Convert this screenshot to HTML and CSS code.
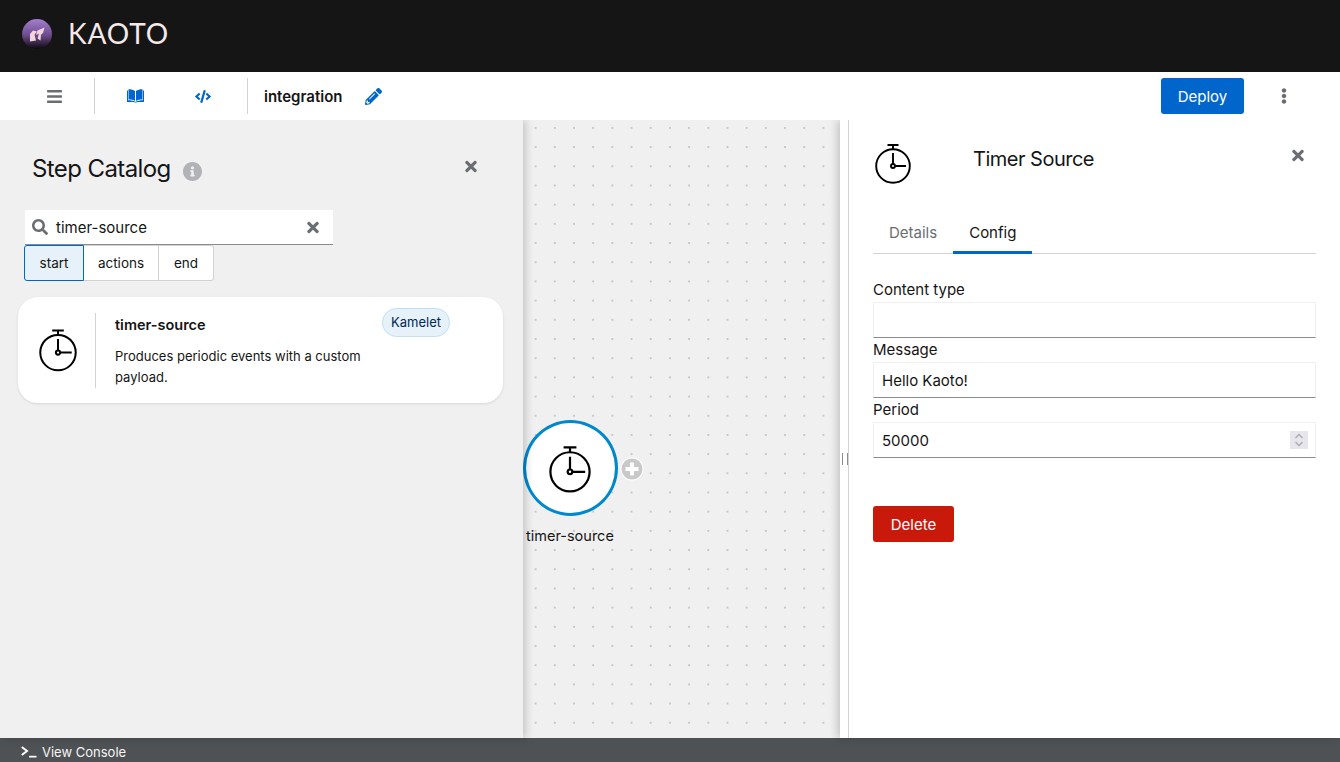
FILE: index.html
```html
<!DOCTYPE html>
<html lang="en">
<head>
<meta charset="utf-8">
<title>Kaoto</title>
<link rel="stylesheet" href="styles.css">
</head>
<body>
<svg class="sprites" width="0" height="0" aria-hidden="true">
  <symbol id="stopwatch" viewBox="0 0 36 40">
    <g fill="none" stroke="#000" stroke-width="1.9">
      <circle cx="18" cy="22" r="16.8"/>
      <path d="M12.5 1h11M18 1v4.5M18 9v11M20.5 22H31"/>
      <circle cx="18" cy="22" r="2"/>
    </g>
  </symbol>
  <symbol id="times" viewBox="0 0 352 512"><path d="M242.72 256l100.07-100.07c12.28-12.28 12.28-32.19 0-44.48l-22.24-22.24c-12.28-12.28-32.19-12.28-44.48 0L176 189.28 75.93 89.21c-12.28-12.28-32.19-12.28-44.48 0L9.21 111.45c-12.28 12.28-12.28 32.19 0 44.48L109.28 256 9.21 356.07c-12.28 12.28-12.28 32.19 0 44.48l22.24 22.24c12.28 12.28 32.2 12.28 44.48 0L176 322.72l100.07 100.07c12.28 12.28 32.2 12.28 44.48 0l22.24-22.24c12.28-12.28 12.28-32.19 0-44.48L242.72 256z"/></symbol>
</svg>

<header class="masthead">
  <svg class="logo-mark" width="30" height="30" viewBox="0 0 30 30" aria-hidden="true">
    <defs>
      <linearGradient id="logo-grad" x1="0" y1="0" x2="0" y2="1">
        <stop offset="0" stop-color="#a47fd0"/>
        <stop offset="0.55" stop-color="#6b4a8a"/>
        <stop offset="1" stop-color="#0c0a0e"/>
      </linearGradient>
    </defs>
    <circle cx="15" cy="15" r="15" fill="url(#logo-grad)"/>
    <path fill="#f3d3dc" d="M8 15 11 11.500 15 12.500 12.500 15.500 14 21.500 8 22.500zM15.500 11.500 22.500 8.500 21 14 19 15.500 18.500 21.500 15.500 19.500 17 14.500 14 16z"/>
  </svg>
  <span class="logo-text">KAOTO</span>
</header>

<nav class="toolbar">
  <div class="tool-cell tool-menu">
    <svg width="15" height="17" viewBox="0 0 448 512" class="icon-grey" aria-hidden="true"><path d="M16 132h416c8.837 0 16-7.163 16-16V76c0-8.837-7.163-16-16-16H16C7.163 60 0 67.163 0 76v40c0 8.837 7.163 16 16 16zm0 160h416c8.837 0 16-7.163 16-16v-40c0-8.837-7.163-16-16-16H16c-8.837 0-16 7.163-16 16v40c0 8.837 7.163 16 16 16zm0 160h416c8.837 0 16-7.163 16-16v-40c0-8.837-7.163-16-16-16H16c-8.837 0-16 7.163-16 16v40c0 8.837 7.163 16 16 16z"/></svg>
  </div>
  <div class="tool-sep"></div>
  <div class="tool-cell tool-book">
    <svg width="17" height="16" viewBox="0 0 17 16" class="icon-blue" aria-hidden="true"><path d="M1.500 1.300c2.500 0 5 .6 6.500 1.800v9.800C6.500 12 4 11.500 1.500 11.500zM15.500 1.300c-2.500 0-5 .6-6.500 1.800v9.800c1.500-.9 4-1.400 6.500-1.400z"/><path d="M0 2.500h1V12.300c2.800 0 5.500.5 7 1.500h1c1.500-1 4.200-1.500 7-1.500V2.500h1V14h-6c-1 0-1.500.5-2.500.5S7 14 6 14H0z"/></svg>
  </div>
  <div class="tool-cell tool-code">
    <svg width="16" height="13" viewBox="0 0 640 512" class="icon-blue" aria-hidden="true"><path d="M278.9 511.5l-61-17.700c-6.400-1.800-10-8.500-8.200-14.900L346.200 8.700c1.800-6.400 8.500-10 14.900-8.200l61 17.700c6.400 1.800 10 8.500 8.200 14.900L293.800 503.300c-1.900 6.400-8.500 10.100-14.900 8.200zm-114-112.200l43.500-46.400c4.600-4.900 4.300-12.700-.8-17.200L117 256l90.600-79.700c5.100-4.500 5.500-12.300.8-17.200l-43.500-46.400c-4.500-4.800-12.100-5.100-17-.5L3.800 247.200c-5.100 4.700-5.100 12.800 0 17.500l144.100 135.100c4.900 4.600 12.500 4.400 17-.5zm327.200.6l144.100-135.100c5.100-4.700 5.100-12.800 0-17.500L492.100 112.100c-4.800-4.500-12.400-4.300-17 .5L431.600 159c-4.600 4.900-4.300 12.700.8 17.200L523 256l-90.600 79.700c-5.100 4.500-5.500 12.300-.8 17.200l43.500 46.400c4.500 4.900 12.100 5.100 17 .6z"/></svg>
  </div>
  <div class="tool-sep"></div>
  <span class="integration-name">integration</span>
  <svg class="pencil icon-blue" width="17" height="17" viewBox="0 0 512 512" aria-hidden="true"><path d="M497.900 142.100l-46.100 46.100c-4.700 4.700-12.300 4.700-17 0l-111-111c-4.700-4.700-4.700-12.300 0-17l46.100-46.100c18.700-18.700 49.100-18.700 67.900 0l60.100 60.100c18.800 18.700 18.800 49.100 0 67.900zM284.200 99.800L21.600 362.400.4 483.900c-2.900 16.400 11.400 30.600 27.800 27.800l121.500-21.300 262.600-262.600c4.700-4.700 4.700-12.300 0-17l-111-111c-4.800-4.700-12.400-4.700-17.100 0zM124.100 339.900c-5.500-5.500-5.500-14.300 0-19.800l154-154c5.500-5.500 14.300-5.500 19.800 0s5.500 14.300 0 19.800l-154 154c-5.500 5.500-14.300 5.500-19.800 0zM88 424h48v36.300l-64.500 11.300-31.100-31.100L51.700 376H88v48z"/></svg>
  <button class="btn btn-deploy" type="button">Deploy</button>
  <svg class="kebab icon-grey" width="6" height="16" viewBox="0 0 192 512" aria-hidden="true"><path d="M96 184c39.800 0 72 32.200 72 72s-32.200 72-72 72-72-32.200-72-72 32.200-72 72-72zM24 80c0 39.800 32.200 72 72 72s72-32.200 72-72S135.800 8 96 8 24 40.200 24 80zm0 352c0 39.800 32.200 72 72 72s72-32.200 72-72-32.200-72-72-72-72 32.200-72 72z"/></svg>
</nav>

<main class="workspace">
  <aside class="catalog">
    <div class="catalog-head">
      <h1 class="catalog-title">Step Catalog</h1>
      <svg class="info" width="19" height="19" viewBox="8 8 496 496" aria-hidden="true"><path d="M256 8C119.043 8 8 119.083 8 256c0 136.997 111.043 248 248 248s248-111.003 248-248C504 119.083 392.957 8 256 8zm0 110c23.196 0 42 18.804 42 42s-18.804 42-42 42-42-18.804-42-42 18.804-42 42-42zm56 254c0 6.627-5.373 12-12 12h-88c-6.627 0-12-5.373-12-12v-24c0-6.627 5.373-12 12-12h12v-64h-12c-6.627 0-12-5.373-12-12v-24c0-6.627 5.373-12 12-12h64c6.627 0 12 5.373 12 12v100h12c6.627 0 12 5.373 12 12v24z"/></svg>
      <svg class="close-x catalog-close icon-grey" width="12" height="17" aria-hidden="true"><use href="#times"/></svg>
    </div>
    <div class="search">
      <svg class="icon-grey" width="16" height="16" viewBox="0 0 512 512" aria-hidden="true"><path d="M505 442.700L405.300 343c-4.500-4.500-10.600-7-17-7H372c27.600-35.300 44-79.700 44-128C416 93.100 322.900 0 208 0S0 93.100 0 208s93.100 208 208 208c48.300 0 92.700-16.400 128-44v16.300c0 6.400 2.500 12.500 7 17l99.700 99.700c9.400 9.400 24.600 9.400 33.900 0l28.300-28.300c9.400-9.400 9.400-24.600.1-34zM208 336c-70.700 0-128-57.200-128-128 0-70.700 57.200-128 128-128 70.700 0 128 57.200 128 128 0 70.700-57.200 128-128 128z"/></svg>
      <span class="search-text">timer-source</span>
      <svg class="icon-grey" width="12" height="17" aria-hidden="true"><use href="#times"/></svg>
    </div>
    <div class="toggle-group">
      <button class="toggle toggle-start is-on" type="button">start</button>
      <button class="toggle toggle-actions" type="button">actions</button>
      <button class="toggle toggle-end" type="button">end</button>
    </div>
    <article class="step-card">
      <div class="step-icon"><svg width="38" height="43" aria-hidden="true"><use href="#stopwatch"/></svg></div>
      <div class="step-body">
        <h2 class="step-name">timer-source</h2>
        <p class="step-desc">Produces periodic events with a custom payload.</p>
      </div>
      <span class="badge">Kamelet</span>
    </article>
  </aside>

  <section class="canvas">
    <div class="node">
      <svg width="42" height="47" aria-hidden="true"><use href="#stopwatch"/></svg>
    </div>
    <svg class="node-add" width="24" height="24" viewBox="0 0 24 24" aria-hidden="true">
      <circle cx="12" cy="12" r="11.500" fill="#fff"/>
      <circle cx="12" cy="12" r="10.500" fill="#c9c9c9"/>
      <path d="M10 5.500h4V10h4.500v4H14v4.500h-4V14H5.500v-4H10z" fill="#fff"/>
    </svg>
    <span class="node-label">timer-source</span>
  </section>

  <aside class="details">
    <div class="splitter"></div>
    <div class="details-inner">
      <div class="details-head">
        <svg width="36" height="40" aria-hidden="true"><use href="#stopwatch"/></svg>
        <h2 class="details-title">Timer Source</h2>
        <svg class="details-close icon-grey" width="12" height="17" aria-hidden="true"><use href="#times"/></svg>
      </div>
      <div class="tabs">
        <span class="tab">Details</span>
        <span class="tab is-active">Config</span>
      </div>
      <form class="config-form">
        <label class="field-label" for="f-type">Content type</label>
        <input class="field" id="f-type" type="text" value="">
        <label class="field-label" for="f-msg">Message</label>
        <input class="field" id="f-msg" type="text" value="Hello Kaoto!">
        <label class="field-label" for="f-period">Period</label>
        <div class="field-wrap">
          <input class="field" id="f-period" type="text" value="50000">
          <svg class="spinner" width="18" height="18" viewBox="0 0 18 18" aria-hidden="true">
            <rect width="18" height="18" fill="#e6e6ec"/>
            <path d="M5.500 7 9 3.500 12.500 7M5.500 11 9 14.500 12.500 11" fill="none" stroke="#a9a9b3" stroke-width="1.300"/>
          </svg>
        </div>
      </form>
      <button class="btn btn-delete" type="button">Delete</button>
    </div>
  </aside>
</main>

<footer class="console-bar">
  <svg width="16" height="12" viewBox="0 0 16 12" aria-hidden="true"><path d="M.8 1 6 5 .8 9" fill="none" stroke="#fff" stroke-width="2"/><path d="M8 9.800h7.500v1.700H8z" fill="#fff"/></svg>
  <span>View Console</span>
</footer>
</body>
</html>
```

FILE: styles.css
```css
* { box-sizing: border-box; }

html, body { height: 100%; }

body {
  margin: 0;
  display: flex;
  flex-direction: column;
  height: 100vh;
  overflow: hidden;
  font-family: "Inter", "Noto Sans", sans-serif;
  color: #151515;
  background: #fff;
}

.sprites { position: absolute; }

.icon-grey { fill: #6a6e73; }
.icon-blue { fill: #06c; }

.masthead {
  flex: 0 0 72px;
  display: flex;
  align-items: center;
  padding-left: 22px;
  gap: 16px;
  background: #151515;
}

.logo-mark { margin-top: -4px; }

.logo-text {
  font-family: "Lato", sans-serif;
  font-weight: 400;
  font-size: 28px;
  letter-spacing: 0.9px;
  color: #f5e9e9;
  margin-top: -6px;
}

.toolbar {
  position: relative;
  z-index: 3;
  flex: 0 0 48px;
  display: flex;
  align-items: center;
  background: #fff;
}

.tool-cell {
  display: flex;
  justify-content: flex-start;
  align-items: center;
  height: 36px;
}

.tool-menu { width: 94px; padding-left: 47px; }
.tool-book { width: 68px; padding-left: 32px; }
.tool-code { width: 84px; padding-left: 32px; }

.tool-sep {
  width: 1px;
  height: 36px;
  background: #d2d2d2;
}

.integration-name {
  margin-left: 16px;
  font-size: 15px;
  font-weight: 600;
}

.pencil { margin-left: 23px; }

.btn {
  border: 0;
  border-radius: 3px;
  color: #fff;
  font-family: inherit;
  font-size: 15px;
  height: 36px;
  padding: 0;
}

.btn-deploy {
  margin-left: auto;
  width: 83px;
  background: #06c;
}

.kebab { margin: 0 53px 0 37px; }

.workspace {
  flex: 1;
  min-height: 0;
  display: flex;
}

.catalog {
  position: relative;
  z-index: 2;
  flex: 0 0 523px;
  background: #f0f0f0;
  box-shadow: 3px 0 8px rgba(3, 3, 3, 0.18);
}

.catalog-head {
  display: flex;
  align-items: center;
  height: 90px;
  padding: 6px 0 0 32px;
}

.catalog-title {
  margin: 0;
  font-size: 24px;
  font-weight: 400;
  letter-spacing: -0.6px;
  color: #151515;
}

.info { fill: #b1b3b6; margin: 7px 0 0 12px; }

.catalog-close { margin: -4px 46px 0 auto; }

.search {
  display: flex;
  align-items: center;
  width: 308px;
  height: 35px;
  margin-left: 25px;
  padding: 0 14px 0 7px;
  background: #fff;
  border-bottom: 1px solid #8a8d90;
}

.search-text {
  flex: 1;
  margin-left: 8px;
  font-size: 15px;
  color: #151515;
}

.toggle-group {
  display: flex;
  height: 36px;
  margin-left: 24px;
}

.toggle {
  font-family: inherit;
  font-size: 13.5px;
  color: #151515;
  background: #fff;
  border: 1px solid #d2d2d2;
  border-left-width: 0;
  padding: 0;
}

.toggle-start { width: 60px; border-left-width: 1px; border-radius: 3px 0 0 3px; }
.toggle-actions { width: 75px; }
.toggle-end { width: 55px; border-radius: 0 3px 3px 0; }

.toggle.is-on {
  background: #e7f1fa;
  border-color: #06c;
}

.step-card {
  display: flex;
  align-items: stretch;
  position: relative;
  width: 485px;
  height: 106px;
  margin: 16px 0 0 18px;
  padding: 16px 0 15px;
  background: #fff;
  border-radius: 20px;
  box-shadow: 0 1px 3px rgba(3, 3, 3, 0.1);
}

.step-icon {
  flex: 0 0 78px;
  display: flex;
  align-items: center;
  justify-content: center;
  padding: 0 0 0 2px;
  border-right: 1px solid #d2d2d2;
}

.step-body {
  width: 265px;
  margin-left: 19px;
}

.step-name {
  margin: 3px 0 0;
  font-size: 14.5px;
  font-weight: 600;
  line-height: 18px;
}

.step-desc {
  margin: 12px 0 0;
  font-size: 13px;
  line-height: 21px;
}

.badge {
  position: absolute;
  left: 364px;
  top: 11px;
  width: 68px;
  height: 29px;
  line-height: 27px;
  text-align: center;
  font-size: 13px;
  color: #002952;
  background: #e7f1fa;
  border: 1px solid #bee1f4;
  border-radius: 15px;
}

.canvas {
  position: relative;
  z-index: 1;
  flex: 0 0 317px;
  background-color: #f0f0f0;
  background-image: radial-gradient(circle, #bdbdbd 0.6px, transparent 1px);
  background-size: 19.2px 19.2px;
  background-position: 3px -1.700px;
}

.node {
  position: absolute;
  left: 0;
  top: 300px;
  width: 95px;
  height: 96px;
  display: flex;
  align-items: center;
  justify-content: center;
  padding: 2px 2px 0 0;
  background: #fff;
  border: 3px solid #0088ce;
  border-radius: 50%;
}

.node-add {
  position: absolute;
  left: 97px;
  top: 337px;
}

.node-label {
  position: absolute;
  left: 3px;
  top: 407px;
  font-size: 14.500px;
  color: #151515;
}

.details {
  position: relative;
  z-index: 2;
  flex: 1;
  display: flex;
  background: #fff;
  box-shadow: -3px 0 8px rgba(3, 3, 3, 0.18);
}

.splitter {
  position: relative;
  flex: 0 0 9px;
  border-right: 1px solid #d2d2d2;
}

.splitter::after {
  content: "";
  position: absolute;
  left: 2px;
  top: 333px;
  width: 4px;
  height: 12px;
  border-left: 1px solid #8a8d90;
  border-right: 1px solid #8a8d90;
}

.details-inner {
  flex: 1;
  padding: 24px 24px 0;
}

.details-head {
  display: flex;
  align-items: flex-start;
  height: 73px;
  padding-left: 2px;
}

.details-title {
  margin: 0 0 0 62px;
  font-size: 20px;
  font-weight: 400;
  letter-spacing: -0.5px;
  line-height: 30px;
}

.details-close { margin: 3px 12px 0 auto; }

.tabs {
  display: flex;
  height: 37px;
  border-bottom: 1px solid #d2d2d2;
}

.tab {
  padding: 6px 16px 0;
  font-size: 15px;
  color: #6a6e73;
}

.tab.is-active {
  color: #151515;
  border-bottom: 3px solid #06c;
  height: 37px;
}

.config-form {
  margin-top: 24px;
}

.field-label {
  display: block;
  font-size: 15px;
  line-height: 24px;
  color: #151515;
}

.field-wrap { position: relative; }

.field {
  display: block;
  width: 100%;
  height: 36px;
  padding: 0 8px;
  font-family: inherit;
  font-size: 15px;
  color: #151515;
  background: #fff;
  border: 1px solid #f0f0f0;
  border-bottom-color: #8a8d90;
  border-radius: 0;
  outline: none;
}

.spinner {
  position: absolute;
  right: 8px;
  top: 9px;
}

.btn-delete {
  width: 81px;
  margin-top: 48px;
  background: #c9190b;
}

.console-bar {
  flex: 0 0 24px;
  display: flex;
  align-items: center;
  gap: 5px;
  padding: 4px 0 0 21px;
  background: #4f5255;
  color: #f5f5f5;
  font-size: 13px;
}
```
